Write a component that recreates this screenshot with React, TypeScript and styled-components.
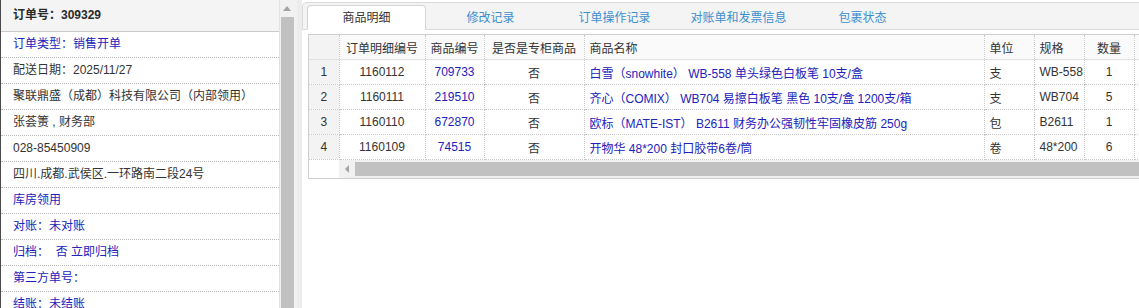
import React, {FC, ReactElement} from 'react';
import styled, {createGlobalStyle} from 'styled-components';

const GlobalStyle = createGlobalStyle`
  html, body {
    margin: 0;
    padding: 0;
    background: #fff;
    overflow: hidden;
  }
  body {
    font-family: "Liberation Sans", "Noto Sans CJK SC", sans-serif;
    font-size: 12px;
    color: #333;
  }
`;

const BLUE = '#2222bb';

const Page = styled.div`
  display: flex;
  width: 1139px;
  height: 308px;
  overflow: hidden;
`;

const InfoPanel = styled.div`
  width: 278px;
  flex: none;
  border-left: 1px solid #4a4a4a;
  border-right: 1px solid #e2e2e2;
  display: flex;
  flex-direction: column;
`;

const InfoHeader = styled.div`
  height: 31px;
  line-height: 31px;
  flex: none;
  padding-left: 12px;
  background: #f4f4f4;
  border-bottom: 1px solid #c9c9c9;
  font-weight: bold;
  color: #2b2b2b;
`;

const InfoRow = styled.div<{ $blue?: boolean }>`
  height: 25px;
  line-height: 25px;
  flex: none;
  padding-left: 12px;
  border-bottom: 1px dotted #b8b8b8;
  color: ${p => (p.$blue ? BLUE : '#333')};
  white-space: nowrap;
`;

const VScroll = styled.div`
  width: 17px;
  flex: none;
  background: #f1f1f1;
  display: flex;
  flex-direction: column;
  align-items: flex-start;
`;

const ArrowBox = styled.div`
  width: 14px;
  height: 17px;
  display: flex;
  align-items: center;
  justify-content: center;
`;

const VThumb = styled.div`
  width: 13px;
  margin-left: 1px;
  flex: 1;
  background: #c1c1c1;
`;

const Splitter = styled.div`
  width: 5px;
  flex: none;
  background: #ececec;
`;

const MainPanel = styled.div`
  flex: 1;
  min-width: 0;
  padding-top: 2px;
  display: flex;
  flex-direction: column;
`;

const TabBar = styled.div`
  height: 26px;
  display: flex;
  align-items: flex-end;
  gap: 5px;
  padding-left: 4px;
  background: #f4f4f4;
  border-top: 1px solid #dadada;
  border-left: 1px solid #dadada;
  border-bottom: 1px solid #dadada;
  border-top-left-radius: 5px;
`;

const Tab = styled.div<{ $active?: boolean }>`
  width: 119px;
  height: 25px;
  line-height: 24px;
  text-align: center;
  box-sizing: border-box;
  margin-bottom: -1px;
  color: ${p => (p.$active ? '#333' : '#3a8fd0')};
  background: ${p => (p.$active ? '#fff' : 'transparent')};
  border: 1px solid ${p => (p.$active ? '#d4d4d4' : 'transparent')};
  border-bottom: 1px solid ${p => (p.$active ? '#fff' : 'transparent')};
  border-radius: 4px 4px 0 0;
`;

const GridBox = styled.div`
  margin: 4px 0 0 6px;
  border: 1px solid #cfcfcf;
  border-right: none;
  overflow: hidden;
`;

const GridTable = styled.table`
  border-collapse: collapse;
  table-layout: fixed;
  width: 880px;
`;

const HeadCell = styled.th<{ $left?: boolean; $num?: boolean }>`
  height: 24px;
  padding: 0 5px;
  font-weight: normal;
  color: #333;
  text-align: ${p => (p.$left ? 'left' : 'center')};
  background: ${p => (p.$num ? '#f3f3f3' : '#fafafa')};
  border-right: 1px dotted #c8c8c8;
  border-bottom: 1px solid #e0e0e0;
  white-space: nowrap;
  overflow: hidden;
`;

const Cell = styled.td<{ $left?: boolean; $blue?: boolean; $num?: boolean }>`
  height: 24px;
  padding: 0 5px;
  text-align: ${p => (p.$left ? 'left' : 'center')};
  color: ${p => (p.$blue ? BLUE : '#333')};
  background: ${p => (p.$num ? '#f3f3f3' : '#fff')};
  border-right: 1px dotted #c8c8c8;
  border-bottom: 1px dotted #c8c8c8;
  white-space: nowrap;
  overflow: hidden;
`;

const HScrollRow = styled.div`
  height: 18px;
  display: flex;
`;

const HScrollGap = styled.div`
  width: 30px;
  flex: none;
  background: #fff;
`;

const HTrack = styled.div`
  flex: 1;
  background: #f1f1f1;
  display: flex;
  align-items: center;
`;

const HArrow = styled.div`
  width: 16px;
  height: 18px;
  display: flex;
  align-items: center;
  justify-content: center;
  flex: none;
`;

const HThumb = styled.div`
  flex: 1;
  height: 14px;
  background: #c1c1c1;
`;

type Line = { text: string; blue?: boolean };

const infoLines: Line[] = [
  {text: '订单类型：销售开单', blue: true},
  {text: '配送日期：2025/11/27'},
  {text: '聚联鼎盛（成都）科技有限公司（内部领用）'},
  {text: '张荟箦 , 财务部'},
  {text: '028-85450909'},
  {text: '四川.成都.武侯区.一环路南二段24号'},
  {text: '库房领用', blue: true},
  {text: '对账：未对账', blue: true},
  {text: '归档：  否 立即归档', blue: true},
  {text: '第三方单号：', blue: true},
  {text: '结账：未结账', blue: true},
];

const tabs = ['商品明细', '修改记录', '订单操作记录', '对账单和发票信息', '包裹状态'];

type Item = { id: string; code: string; special: string; name: string; unit: string; spec: string; qty: number };

const items: Item[] = [
  {id: '1160112', code: '709733', special: '否', name: '白雪（snowhite） WB-558 单头绿色白板笔 10支/盒', unit: '支', spec: 'WB-558', qty: 1},
  {id: '1160111', code: '219510', special: '否', name: '齐心（COMIX） WB704 易擦白板笔 黑色 10支/盒 1200支/箱', unit: '支', spec: 'WB704', qty: 5},
  {id: '1160110', code: '672870', special: '否', name: '欧标（MATE-IST） B2611 财务办公强韧性牢固橡皮筋 250g', unit: '包', spec: 'B2611', qty: 1},
  {id: '1160109', code: '74515', special: '否', name: '开物华 48*200 封口胶带6卷/筒', unit: '卷', spec: '48*200', qty: 6},
];

const App: FC = (): ReactElement => {
  return (
    <>
      <GlobalStyle/>
      <Page>
        <InfoPanel>
          <InfoHeader>订单号：309329</InfoHeader>
          {infoLines.map((line, i) => (
            <InfoRow key={i} $blue={line.blue}>{line.text.replace(/ /g, '\u00a0')}</InfoRow>
          ))}
        </InfoPanel>

        <VScroll>
          <ArrowBox>
            <svg width="8" height="5" viewBox="0 0 8 5">
              <path d="M0 5 L4 0 L8 5 Z" fill="#a3a3a3"/>
            </svg>
          </ArrowBox>
          <VThumb/>
        </VScroll>
        <Splitter/>

        <MainPanel>
          <TabBar>
            {tabs.map((t, i) => (
              <Tab key={t} $active={i === 0}>{t}</Tab>
            ))}
          </TabBar>

          <GridBox>
            <GridTable>
              <colgroup>
                <col style={{width: 30}}/>
                <col style={{width: 86}}/>
                <col style={{width: 59}}/>
                <col style={{width: 100}}/>
                <col style={{width: 400}}/>
                <col style={{width: 50}}/>
                <col style={{width: 50}}/>
                <col style={{width: 50}}/>
                <col style={{width: 55}}/>
              </colgroup>
              <thead>
                <tr>
                  <HeadCell $num/>
                  <HeadCell>订单明细编号</HeadCell>
                  <HeadCell>商品编号</HeadCell>
                  <HeadCell>是否是专柜商品</HeadCell>
                  <HeadCell $left>商品名称</HeadCell>
                  <HeadCell $left>单位</HeadCell>
                  <HeadCell $left>规格</HeadCell>
                  <HeadCell>数量</HeadCell>
                  <HeadCell/>
                </tr>
              </thead>
              <tbody>
                {items.map((row, index) => (
                  <tr key={row.id}>
                    <Cell $num>{index + 1}</Cell>
                    <Cell>{row.id}</Cell>
                    <Cell $blue>{row.code}</Cell>
                    <Cell>{row.special}</Cell>
                    <Cell $left $blue>{row.name.replace(/ /g, '\u00a0')}</Cell>
                    <Cell $left>{row.unit}</Cell>
                    <Cell $left>{row.spec}</Cell>
                    <Cell>{row.qty}</Cell>
                    <Cell/>
                  </tr>
                ))}
              </tbody>
            </GridTable>
            <HScrollRow>
              <HScrollGap/>
              <HTrack>
                <HArrow>
                  <svg width="4" height="8" viewBox="0 0 4 8">
                    <path d="M4 0 L0 4 L4 8 Z" fill="#a3a3a3"/>
                  </svg>
                </HArrow>
                <HThumb/>
              </HTrack>
            </HScrollRow>
          </GridBox>
        </MainPanel>
      </Page>
    </>
  );
}

export default App;
